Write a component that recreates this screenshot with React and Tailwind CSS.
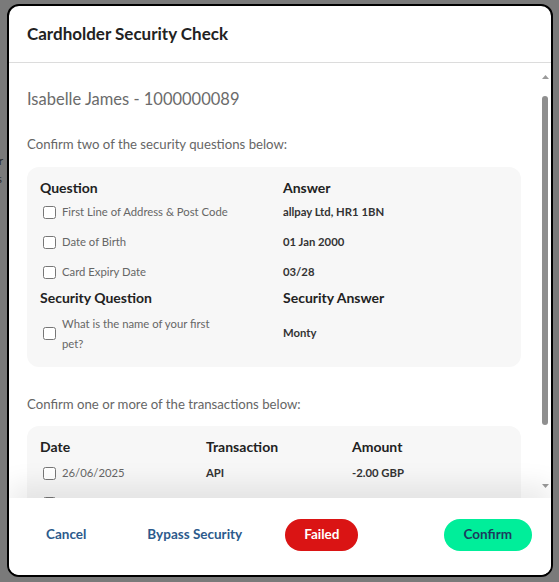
const questions = [
  { label: 'First Line of Address & Post Code', answer: 'allpay Ltd, HR1 1BN' },
  { label: 'Date of Birth', answer: '01 Jan 2000' },
  { label: 'Card Expiry Date', answer: '03/28' },
]

const transactions = [
  { date: '26/06/2025', type: 'API', amount: '-2.00 GBP' },
  { date: '25/06/2025', type: 'API', amount: '-2.00 GBP' },
  { date: '24/06/2025', type: 'API', amount: '-2.00 GBP' },
]

function Check() {
  return <input type="checkbox" className="m-0 ml-[3px] mr-[6px] h-[13px] w-[13px] shrink-0" />
}

// headless render hides native scrollbars, so draw the one the screenshot shows
function FakeScrollbar() {
  return (
    <div className="pointer-events-none absolute right-[2px] top-0 flex h-full w-[8px] flex-col items-center">
      <svg width="7" height="4" viewBox="0 0 7 4" className="mt-[12px]">
        <path d="M3.5 0 L7 4 L0 4 Z" fill="#9a9a9a" />
      </svg>
      <div className="mt-[17px] h-[329px] w-[6px] rounded-full bg-[#8f8f8f]" />
      <svg width="7" height="4" viewBox="0 0 7 4" className="mt-[59px]">
        <path d="M0 0 L7 0 L3.5 4 Z" fill="#9a9a9a" />
      </svg>
    </div>
  )
}

export default function App() {
  return (
    <div className="relative h-[582px] w-[559px] overflow-hidden bg-[#7a7a7a] font-['Lato',sans-serif]">
      <div className="absolute left-[-10px] top-[152px] text-[12px] leading-[18px] text-[#2b2b2b]">
        <div>alr</div>
        <div>us</div>
      </div>

      <div className="absolute left-[7px] top-[4px] flex h-[573px] w-[546px] flex-col overflow-hidden rounded-[12px] border-2 border-black bg-white">
        <div className="flex h-[57px] shrink-0 items-center border-b border-[#dcdcdc] px-[18px]">
          <h2 className="text-[17px] font-bold text-[#222]">Cardholder Security Check</h2>
        </div>

        <div className="relative min-h-0 flex-1">
          <div className="h-full overflow-y-auto px-[18px] pb-[24px] pt-[24px] pr-[30px]">
            <p className="text-[16.5px] leading-[24px] text-[#6b6b6b]">Isabelle James - 1000000089</p>
            <p className="mt-[24px] text-[13.2px] text-[#666]">Confirm two of the security questions below:</p>

            <div className="mt-[12px] rounded-[12px] bg-[#f7f7f7] px-[13px] pb-[13px] pt-[11px]">
              <div className="grid grid-cols-[243px_1fr] items-center">
                <div className="text-[14px] font-bold leading-[20px] text-[#222]">Question</div>
                <div className="text-[14px] font-bold leading-[20px] text-[#222]">Answer</div>
                {questions.map((q) => (
                  <div key={q.label} className="contents">
                    <label className="flex h-[30px] items-center text-[11.3px] text-[#666]">
                      <Check />
                      {q.label}
                    </label>
                    <div className="text-[11.3px] font-bold text-[#333]">{q.answer}</div>
                  </div>
                ))}
                <div className="text-[14px] font-bold leading-[20px] text-[#222]">Security Question</div>
                <div className="text-[14px] font-bold leading-[20px] text-[#222]">Security Answer</div>
                <label className="mt-[6px] flex items-center text-[11.3px] leading-[20px] text-[#666]">
                  <Check />
                  <span className="w-[152px]">What is the name of your first pet?</span>
                </label>
                <div className="mt-[6px] text-[11.3px] font-bold text-[#333]">Monty</div>
              </div>
            </div>

            <p className="mt-[28px] text-[13.2px] text-[#666]">Confirm one or more of the transactions below:</p>

            <div className="mt-[11px] rounded-[12px] bg-[#f7f7f7] px-[13px] pb-[13px] pt-[11px]">
              <div className="grid grid-cols-[166px_146px_1fr] items-center">
                <div className="mb-[2px] text-[14px] font-bold leading-[20px] text-[#222]">Date</div>
                <div className="mb-[2px] text-[14px] font-bold leading-[20px] text-[#222]">Transaction</div>
                <div className="mb-[2px] text-[14px] font-bold leading-[20px] text-[#222]">Amount</div>
                {transactions.map((t, i) => (
                  <div key={i} className="contents">
                    <label className="flex h-[30px] items-center text-[11.3px] text-[#666]">
                      <Check />
                      {t.date}
                    </label>
                    <div className="text-[11.3px] font-bold text-[#333]">{t.type}</div>
                    <div className="text-[11.3px] font-bold text-[#333]">{t.amount}</div>
                  </div>
                ))}
              </div>
            </div>
          </div>
          <FakeScrollbar />
        </div>

        <div className="relative z-10 flex h-[77px] shrink-0 items-center gap-[25px] bg-white px-[19px] pb-[4px] shadow-[0_-14px_24px_rgba(0,0,0,0.08)]">
          <button className="h-[32px] px-[18px] text-[13.5px] font-bold text-[#2c5a8c]">Cancel</button>
          <button className="h-[32px] px-[18px] text-[13.5px] font-bold text-[#2c5a8c]">Bypass Security</button>
          <button className="h-[32px] rounded-full bg-[#da1414] px-[19px] text-[13.5px] font-bold text-white">Failed</button>
          <button className="ml-auto h-[32px] rounded-full bg-[#00ee9a] px-[20px] text-[13.5px] font-bold text-[#1c3b5e]">Confirm</button>
        </div>
      </div>
    </div>
  )
}
